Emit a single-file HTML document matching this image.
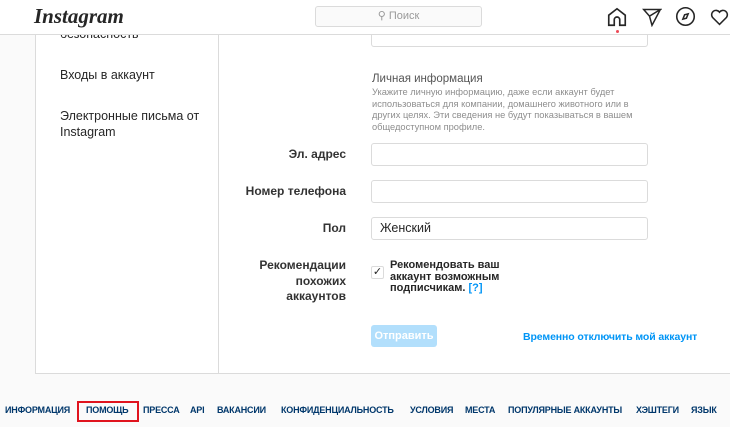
<!DOCTYPE html>
<html><head><meta charset="utf-8"><style>
*{box-sizing:border-box;margin:0;padding:0}
body{width:730px;height:427px;overflow:hidden;background:#fafafa;font-family:"Liberation Sans","DejaVu Sans",sans-serif;color:#262626;position:relative}
.a{position:absolute;white-space:nowrap}
.hdr{position:absolute;left:0;top:0;width:730px;height:35px;background:#fff;border-bottom:1px solid #dbdbdb;z-index:2}
.panel{position:absolute;left:35px;top:20px;width:710px;height:354px;background:#fff;border:1px solid #dbdbdb}
.inp{position:absolute;left:371px;width:277px;height:23px;border:1px solid #dbdbdb;border-radius:3px;background:#fff}
.lbl{position:absolute;right:384px;font-size:12px;font-weight:bold;text-align:right;color:#333}
.f{position:absolute;top:405px;font-size:9px;font-weight:bold;color:#00376b;letter-spacing:-0.2px;white-space:nowrap}
</style></head><body>
<div class="panel"></div>
<div class="a" style="left:218px;top:20px;width:1px;height:354px;background:#dbdbdb"></div>
<div class="a" style="left:371px;top:20px;width:277px;height:27px;border:1px solid #dbdbdb;border-top:none;border-radius:3px"></div>
<div class="a" style="left:60px;top:27px;font-size:12.5px">безопасность</div>
<div class="hdr">
 <div class="a" style="left:34px;top:4px;font-family:'Liberation Serif',serif;font-style:italic;font-size:21px;font-weight:bold;color:#262626">Instagram</div>
 <div class="a" style="left:315px;top:6px;width:167px;height:21px;background:#fafafa;border:1px solid #dbdbdb;border-radius:3px;font-size:11px;color:#999;text-align:center;line-height:19px">⚲ Поиск</div>
 <svg class="a" style="left:606px;top:6px" width="22" height="22" viewBox="0 0 24 24" fill="none" stroke="#262626" stroke-width="1.8"><path d="M3 10L12 3l9 7v11h-6v-6a3 3 0 0 0-6 0v6H3z"/></svg>
 <div class="a" style="left:616px;top:30px;width:3px;height:3px;border-radius:2px;background:#ed4956"></div>
 <svg class="a" style="left:642px;top:7px" width="20" height="20" viewBox="0 0 24 24" fill="none" stroke="#262626" stroke-width="1.8"><path d="M22 3L9 11 2 3z M9 11l3 11 10-19"/></svg>
 <svg class="a" style="left:675px;top:6px" width="21" height="21" viewBox="0 0 24 24" fill="none" stroke="#262626" stroke-width="1.8"><circle cx="12" cy="12" r="10"/><path d="M15 9l-2 5-4 1 2-5z"/></svg>
 <svg class="a" style="left:709px;top:6px" width="21" height="21" viewBox="0 0 24 24" fill="none" stroke="#262626" stroke-width="1.8"><path d="M12 21l-8-8a5 5 0 0 1 8-6 5 5 0 0 1 8 6z"/></svg>
</div>
<div class="a" style="left:60px;top:68px;font-size:12.5px">Входы в аккаунт</div>
<div class="a" style="left:60px;top:108px;font-size:12.5px;line-height:16px">Электронные письма от<br>Instagram</div>
<div class="a" style="left:372px;top:73px;font-size:11.5px;color:#555">Личная информация</div>
<div class="a" style="left:372px;top:87px;font-size:9.3px;line-height:11.5px;color:#8e8e8e">Укажите личную информацию, даже если аккаунт будет<br>использоваться для компании, домашнего животного или в<br>других целях. Эти сведения не будут показываться в вашем<br>общедоступном профиле.</div>
<div class="lbl" style="top:147px">Эл. адрес</div>
<div class="inp" style="top:143px"></div>
<div class="lbl" style="top:184px">Номер телефона</div>
<div class="inp" style="top:180px"></div>
<div class="lbl" style="top:221px">Пол</div>
<div class="inp" style="top:217px;font-size:12.5px;padding-left:8px;line-height:21px">Женский</div>
<div class="lbl" style="top:258px;line-height:15.5px">Рекомендации<br>похожих<br>аккаунтов</div>
<div class="a" style="left:371px;top:266px;width:13px;height:13px;border:1px solid #dbdbdb;border-radius:2px;font-size:11px;line-height:11px;text-align:center">✓</div>
<div class="a" style="left:390px;top:260px;font-size:11px;font-weight:bold;line-height:11.5px">Рекомендовать ваш<br>аккаунт возможным<br>подписчикам. <span style="color:#0095f6">[?]</span></div>
<div class="a" style="left:371px;top:325px;width:66px;height:22px;background:#b2dffc;border-radius:3px;color:#fff;font-size:11px;font-weight:bold;text-align:center;line-height:22px">Отправить</div>
<div class="a" style="left:523px;top:331px;font-size:10.5px;font-weight:bold;color:#0095f6;letter-spacing:-0.1px">Временно отключить мой аккаунт</div>
<div class="f" style="left:5px">ИНФОРМАЦИЯ</div>
<div class="a" style="left:77px;top:401px;width:62px;height:21px;border:2px solid #e0141e"></div>
<div class="f" style="left:86px">ПОМОЩЬ</div>
<div class="f" style="left:143px">ПРЕССА</div>
<div class="f" style="left:190px">API</div>
<div class="f" style="left:217px">ВАКАНСИИ</div>
<div class="f" style="left:281px">КОНФИДЕНЦИАЛЬНОСТЬ</div>
<div class="f" style="left:410px">УСЛОВИЯ</div>
<div class="f" style="left:465px">МЕСТА</div>
<div class="f" style="left:508px">ПОПУЛЯРНЫЕ АККАУНТЫ</div>
<div class="f" style="left:636px">ХЭШТЕГИ</div>
<div class="f" style="left:691px">ЯЗЫК</div>
</body></html>
